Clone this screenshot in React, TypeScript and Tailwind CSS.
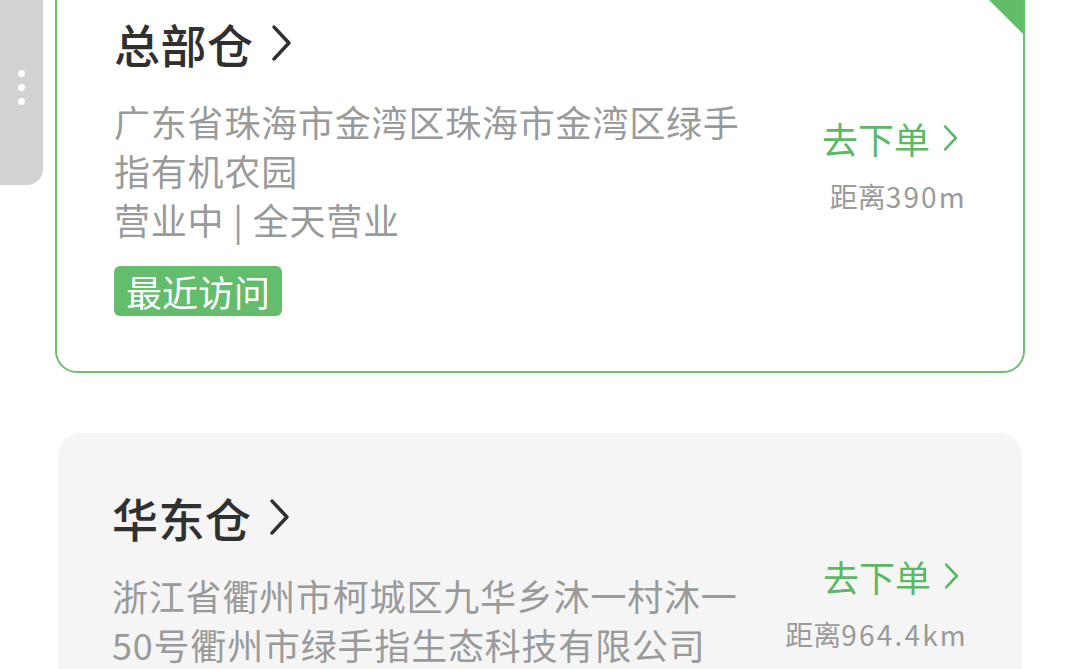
import React from "react";

const font = { fontFamily: '"Noto Sans CJK SC", "Noto Sans", sans-serif' };

function Chevron({ className, stroke = 3 }: { className?: string; stroke?: number }) {
  return (
    <svg viewBox="0 0 20 34" fill="none" stroke="currentColor" className={className}>
      <path d="M3 2l14 15L3 32" strokeWidth={stroke} strokeLinecap="round" strokeLinejoin="round" />
    </svg>
  );
}

type Store = {
  name: string;
  address: string;
  hours: string;
  distance: string;
  recent?: boolean;
};

const stores: Store[] = [
  {
    name: "总部仓",
    address: "广东省珠海市金湾区珠海市金湾区绿手指有机农园",
    hours: "营业中 | 全天营业",
    distance: "390m",
    recent: true,
  },
  {
    name: "华东仓",
    address: "浙江省衢州市柯城区九华乡沐一村沐一50号衢州市绿手指生态科技有限公司",
    hours: "营业中 | 全天营业",
    distance: "964.4km",
  },
];

function StoreCard({ store, active }: { store: Store; active?: boolean }) {
  return (
    <div
      className={
        active
          ? "relative overflow-hidden rounded-[22px] border-2 border-[#6cc072] bg-white pt-[54px] pb-[55px] pl-[57px] pr-[56px]"
          : "relative overflow-hidden rounded-[22px] bg-[#f5f5f5] mx-[3px] pt-[54px] pb-[56px] pl-[54px] pr-[54px]"
      }
    >
      {active && (
        <div className="absolute right-0 top-0 h-[75px] w-[75px] bg-[#62bd6b] [clip-path:polygon(0_0,100%_0,100%_100%)]" />
      )}
      <div className="flex items-center justify-between">
        <div className="flex flex-col">
          <div className="flex items-center text-[46px] leading-[60px] font-medium tracking-[0.5px] text-[#303030]">
            <span>{store.name}</span>
            <Chevron className="ml-[16px] h-[36px] w-[23px] text-[#303030]" stroke={3.4} />
          </div>
          <div className="mt-[24px] w-[640px] text-[36px] leading-[49px] tracking-[0.8px] text-[#9a9a9a]">
            <p>{store.address}</p>
            <p>{store.hours}</p>
          </div>
          {store.recent && (
            <div className="mt-[22px] flex">
              <span className="rounded-[6px] bg-[#63bd6c] px-[12px] text-[36px] leading-[50px] text-white">
                最近访问
              </span>
            </div>
          )}
        </div>
        <div className="flex flex-col items-end">
          <div className="flex items-center text-[36px] leading-[44px] text-[#5cb866]">
            <span>去下单</span>
            <Chevron className="ml-[12px] mr-[8px] h-[26px] w-[17px] text-[#5cb866]" stroke={3.4} />
          </div>
          <div className="mt-[18px] text-[28px] leading-[36px] text-[#9a9a9a]">
            距离<span className="tracking-[2.2px]">{store.distance}</span>
          </div>
        </div>
      </div>
    </div>
  );
}

export default function App() {
  return (
    <div className="relative h-[669px] w-[1080px] overflow-hidden bg-white" style={font}>
      <div className="absolute left-0 top-[-20px] z-10 flex h-[205px] w-[43px] flex-col items-center justify-center gap-[7px] rounded-r-[16px] bg-[#d2d2d2] pt-[9px]">
        <span className="h-[7px] w-[7px] rounded-full bg-white" />
        <span className="h-[7px] w-[7px] rounded-full bg-white" />
        <span className="h-[7px] w-[7px] rounded-full bg-white" />
      </div>
      <div className="-mt-[43px] flex flex-col gap-[60px] px-[55px]">
        {stores.map((s, i) => (
          <StoreCard key={s.name} store={s} active={i === 0} />
        ))}
      </div>
    </div>
  );
}
